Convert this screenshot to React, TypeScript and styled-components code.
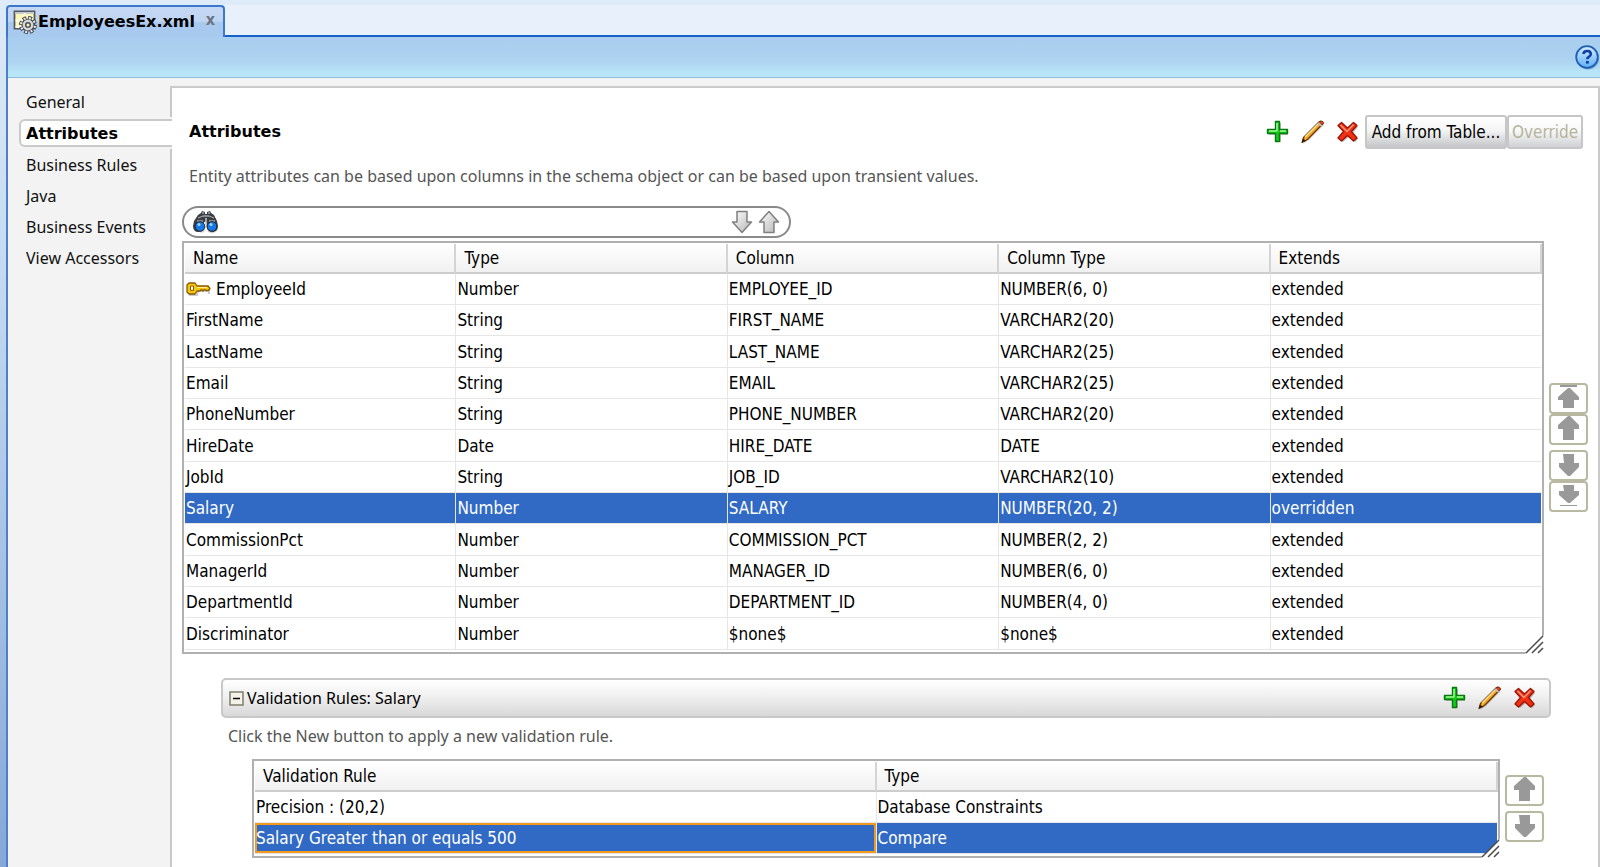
import React from "react";
import styled, { createGlobalStyle, css } from "styled-components";

const UI = '"DejaVu Sans Condensed", "Noto Sans", sans-serif';
const PROSE = '"Noto Sans", "DejaVu Sans Condensed", sans-serif';
const BOLD = '"DejaVu Sans", "Noto Sans", sans-serif';

const GlobalStyle = createGlobalStyle`
  * { box-sizing: border-box; }
  body { margin: 0; font: 17px/20px ${UI}; color: #000; }
  button, input { font: inherit; color: inherit; }
`;

const Window = styled.div`
  display: flex;
  flex-direction: column;
  min-height: 100vh;
  padding: 5px 0 0 6px;
  background: linear-gradient(#deebf8 0, #c4daf0 270px, #bcd5ed 340px, #86a8d8 867px);
`;

const TabBar = styled.div`
  display: flex;
  height: 32px;
  background: #e8f1fb;
`;

const EditorTab = styled.div`
  display: flex;
  align-items: center;
  gap: 1px;
  width: 219px;
  padding: 0 8px 0 5px;
  border: 2px solid #3b78cc;
  border-bottom: 0;
  border-radius: 4px 4px 0 0;
  background: linear-gradient(#c5d8f4 0, #c0d5f2 14px, #a9c8ee 16px, #a8caee 100%);
`;

const TabTitle = styled.span`
  flex: 1;
  font: bold 16px/20px ${BOLD};
  white-space: nowrap;
`;

const BareButton = styled.button`
  display: flex;
  align-items: center;
  justify-content: center;
  padding: 0;
  border: 0;
  background: none;
`;

const CloseTab = styled(BareButton)`
  font: bold 16px/16px ${UI};
  color: #6c7480;
  margin-bottom: 4px;
`;

const TabRule = styled.div`
  flex: 1;
  border-bottom: 2px solid #1462c8;
`;

const Editor = styled.div`
  flex: 1;
  display: flex;
  flex-direction: column;
  border-left: 2px solid #4f7fcb;
  background: #f3f3f3;
`;

const HeaderBand = styled.div`
  display: flex;
  justify-content: flex-end;
  align-items: center;
  height: 41px;
  border-bottom: 1px solid #8cbce0;
  background: linear-gradient(#a8cdee 0, #aed3f0 60%, #b8e6f8 90%);
`;

const Columns = styled.div`
  flex: 1;
  display: flex;
  padding-top: 8px;
`;

const Nav = styled.nav`
  width: 164px;
  display: flex;
  flex-direction: column;
  padding-left: 11px;
`;

const NavEdge = css`
  border-right: 2px solid #c8c8c8;
`;

const NavLink = styled.a<{ $current?: boolean }>`
  display: block;
  height: 31px;
  padding-left: 7px;
  font: 16px/33px ${PROSE};
  color: #111;
  text-decoration: none;
  ${NavEdge}
  ${(p) =>
    p.$current &&
    css`
      height: 28px;
      margin: 2px 0;
      padding-left: 5px;
      font: bold 16px/26px ${BOLD};
      color: #000;
      border: 2px solid #cacaca;
      border-right: 0;
      border-radius: 6px 0 0 6px;
      background: #fff;
    `}
`;

const NavFill = styled.div`
  flex: 1;
  ${NavEdge}
`;

const Panel = styled.main`
  flex: 1;
  min-width: 0;
  padding: 27px 10px 10px;
  border-top: 2px solid #cacaca;
  border-right: 2px solid #cacaca;
  background: #fff;
`;

const PanelHead = styled.div`
  display: flex;
  align-items: center;
  height: 34px;
  padding: 0 5px 0 7px;
`;

const PanelTitle = styled.h1`
  flex: 1;
  margin: 0;
  font: bold 16px/20px ${BOLD};
`;

const ToolIcons = styled.div`
  display: flex;
  gap: 11px;
`;

const PushButton = styled.button`
  height: 34px;
  padding: 0;
  border: 2px solid #c6c6c6;
  border-radius: 3px;
  background: linear-gradient(#fff 0, #f4f4f4 45%, #c4c6c8 100%);
  white-space: nowrap;
  &:disabled { color: #b4b49c; background: linear-gradient(#fff 0, #f8f8f8 45%, #cfd1d3 100%); }
`;

const ButtonPair = styled.div`
  display: grid;
  grid-template-columns: 142px 76px;
  margin-left: 5px;
`;

const Description = styled.p`
  margin: 0;
  padding: 17px 7px 0;
  font: 16px/20px ${PROSE};
  color: #555;
`;

const SearchBox = styled.div`
  display: flex;
  align-items: center;
  width: 609px;
  max-width: 100%;
  height: 32px;
  margin: 20px 0 3px;
  padding: 0 9px;
  border: 2px solid #8a8a8a;
  border-radius: 16px;
`;

const SearchInput = styled.input`
  flex: 1;
  min-width: 0;
  margin: 0 8px;
  border: 0;
  outline: 0;
  background: none;
`;

const FindButtons = styled.div`
  display: flex;
  gap: 5px;
`;

const WithMovers = styled.div`
  display: flex;
  align-items: center;
  gap: 5px;
`;

const TableFrame = styled.div`
  position: relative;
  flex: 1;
  min-width: 0;
  padding: 1px 0 2px 1px;
  border: 2px solid #b0b0b0;
`;

const Table = styled.table`
  width: 100%;
  table-layout: fixed;
  border-collapse: separate;
  border-spacing: 0;
`;

const HeadCell = styled.th`
  height: 30px;
  padding: 0 0 0 8px;
  border-right: 2px solid #d4d4d4;
  border-bottom: 2px solid #cdcdcd;
  background: linear-gradient(#fff, #f1f1f1);
  font-weight: normal;
  text-align: left;
`;

const Row = styled.tr<{ $selected?: boolean }>`
  height: 31px;
  &:nth-child(3n) { height: 32px; }
  ${(p) => p.$selected && css`color: #fff; background: #316ac5;`}
`;

const Cell = styled.td<{ $focused?: boolean }>`
  padding: 0 0 0 1px;
  border-right: 1px solid #e6e6e6;
  border-bottom: 1px solid #e6e6e6;
  white-space: nowrap;
  &:last-child { border-right-color: #fff; }
  ${(p) => p.$focused && css`box-shadow: inset 0 0 0 2px #f39a1c;`}
`;

const KeyLabel = styled.span`
  display: inline-flex;
  align-items: center;
  gap: 5px;
  vertical-align: top;
`;

const Grip = styled.svg`
  position: absolute;
  right: -2px;
  bottom: -2px;
  display: block;
`;

const Movers = styled.div`
  display: flex;
  flex-direction: column;
  gap: 5px;
`;

const MoverGroup = styled.div`
  display: flex;
  flex-direction: column;
`;

const MoverButton = styled(BareButton)`
  width: 39px;
  height: 31px;
  border: 2px solid #b9b9a2;
  border-radius: 4px;
  background: #fff;
`;

const Section = styled.section`
  display: flex;
  flex-direction: column;
  margin: 24px 37px 0 39px;
`;

const SectionHead = styled.div`
  display: flex;
  align-items: center;
  height: 40px;
  padding: 0 12px 0 6px;
  border: 2px solid #c8c8c8;
  border-radius: 5px;
  background: linear-gradient(#fff 0, #f0f0f0 45%, #d8d8d8 100%);
`;

const SectionTitle = styled.h2`
  flex: 1;
  margin: 0 0 0 3px;
  font: 16px/20px ${PROSE};
`;

const SectionBody = styled.div`
  padding: 8px 7px 0;
`;

const Hint = styled(Description)`
  padding: 0;
`;

const Indented = styled.div`
  padding: 13px 0 0 24px;
`;

const PlusIcon = () => (
  <svg width="24" height="24" viewBox="0 0 24 24" aria-hidden="true">
    <path d="M10 3h5v7h7v5h-7v7h-5v-7H3v-5h7z" fill="#000" opacity=".25" />
    <path d="M9.500 1.500h4v8h8v4h-8v8h-4v-8h-8v-4h8z" fill="#14cc14" stroke="#067a10" strokeWidth="1.400" strokeLinejoin="round" />
    <path d="M11 3v8M3 11h8M14 11h6" stroke="#a5f59d" strokeWidth="1.500" fill="none" />
  </svg>
);

const PencilIcon = () => (
  <svg width="24" height="24" viewBox="0 0 24 24" aria-hidden="true">
    <path d="M2 24l3-5L20 4l3 1-15 15z" fill="#000" opacity=".18" />
    <path d="M1 22.500L2.500 17.500 18.500 1.500q2.500-1 4 1.500L6.500 19.500z" fill="#f6a623" stroke="#6b3508" strokeWidth="1.200" strokeLinejoin="round" />
    <path d="M4 17L17 4" stroke="#ffe79c" strokeWidth="1.500" />
    <path d="M17 3l4 3" stroke="#b9bcc9" strokeWidth="2" />
    <path d="M18.500 1.500q3-1 4 1.500l-1.500 2z" fill="#f0501c" stroke="#8c2a0a" strokeWidth=".8" />
    <path d="M1 22.500l1-4 3 2.200z" fill="#2a1a10" />
  </svg>
);

const CrossIcon = () => (
  <svg width="24" height="24" viewBox="0 0 24 24" aria-hidden="true">
    <path d="M4 7l3-3 6 5 6-5 3 3-5 6 5 6-3 3-6-5-6 5-3-3 5-6z" fill="#000" opacity=".25" />
    <path d="M2 5.500L5.500 2.500l6 5.500 6-5.500L21 5.500 15.500 11.500 21 18l-3.500 3-6-5.500-6 5.500L2 18l5.500-6.500z" fill="#f03212" stroke="#9c1206" strokeWidth="1.300" strokeLinejoin="round" />
    <path d="M4.500 5L11 11.500 17.500 4.500" stroke="#ff9a80" strokeWidth="1.500" fill="none" />
  </svg>
);

const FileIcon = () => (
  <svg width="24" height="24" viewBox="0 0 24 24" aria-hidden="true">
    <path d="M1.500 1.500h20v17h-20z" fill="#fbf7b4" stroke="#555a60" strokeWidth="1.800" />
    <path d="M2 3h19" stroke="#c5c9cd" strokeWidth="2" />
    <path d="M2.500 10.500h6M11.500 3v5M2.500 17h7" stroke="#fff" strokeWidth="2" />
    <circle cx="15" cy="15" r="7" fill="none" stroke="#45494f" strokeWidth="4" strokeDasharray="3.600 1.898" />
    <circle cx="15" cy="15" r="6" fill="#d5d7da" stroke="#45494f" strokeWidth="1.200" />
    <circle cx="15" cy="15" r="7" fill="none" stroke="#e6e8ea" strokeWidth="2.200" strokeDasharray="2 3.498" strokeDashoffset="-.8" />
    <circle cx="15" cy="15" r="2.300" fill="#f8f4b0" stroke="#4c5056" strokeWidth="1.500" />
  </svg>
);

const HelpIcon = () => (
  <svg width="25" height="25" viewBox="0 0 25 25" aria-hidden="true">
    <defs>
      <linearGradient id="help" x1="0" y1="0" x2="0" y2="1">
        <stop offset="0" stopColor="#d6ebff" />
        <stop offset="1" stopColor="#5fb0f5" />
      </linearGradient>
    </defs>
    <circle cx="13" cy="13.500" r="11" fill="#24508c" opacity=".4" />
    <circle cx="12" cy="12" r="10.800" fill="url(#help)" stroke="#1e5fb4" strokeWidth="1.800" />
    <path d="M8.500 9q.2-3 3.700-3 3.600 0 3.600 3 0 1.700-2 2.800-1.500.8-1.500 2.400" fill="none" stroke="#0e3fa6" strokeWidth="2.600" />
    <path d="M11 16h2.800v2.600H11z" fill="#0e3fa6" />
  </svg>
);

const BinocularsIcon = () => (
  <svg width="26" height="24" viewBox="0 0 26 24" aria-hidden="true">
    <path d="M2 19q4 5 9 3l2-6 2 6q6 3 10-2l-2-6z" fill="#000" opacity=".2" />
    <path d="M5 5l3-2 1-2 3 1v2h2V2l3-1 1 2 3 2 3 6 1 5q0 5-5 6-5 0-6-4l-1-6h-2l-1 6q-1 4-6 4-4-1-4-6l1-5z" fill="#3a3d42" />
    <path d="M9 3l2 0M15 3h2M5 8l5-2M16 6l5 2M10 6h6M4 11h6M16 11h6" stroke="#a0a4aa" strokeWidth="1.300" />
    <path d="M13 8v7" stroke="#c6c9ce" strokeWidth="1.500" />
    <circle cx="7" cy="16.500" r="4.800" fill="#1678e6" stroke="#22262c" strokeWidth="1" />
    <circle cx="19" cy="16.500" r="4.800" fill="#1678e6" stroke="#22262c" strokeWidth="1" />
    <circle cx="6" cy="14.500" r="1.500" fill="#9ed2ff" />
    <circle cx="18" cy="14.500" r="1.500" fill="#9ed2ff" />
  </svg>
);

const KeyIcon = () => (
  <svg width="25" height="14" viewBox="0 0 25 14" aria-hidden="true">
    <path d="M3 13h8l1-4h11v3" fill="none" stroke="#000" opacity=".2" strokeWidth="2" />
    <path d="M3 1h6l2 3h11l2 2.500-1.500 2H20l-1.500-1L17 9l-1.500-1.500L14 9h-3l-2 3H3L1 10V3z" fill="#f7c90e" stroke="#8a5a00" strokeWidth="1.300" strokeLinejoin="round" />
    <path d="M4.500 4h3v4.500h-3z" fill="#fff" stroke="#8a5a00" />
    <path d="M11 5.500h10" stroke="#fff08a" />
  </svg>
);

const FindArrow = ({ up }: { up?: boolean }) => (
  <svg width="22" height="24" viewBox="0 0 22 24" aria-hidden="true">
    <defs>
      <linearGradient id={up ? "fu" : "fd"} x1="0" y1="0" x2="1" y2="1">
        <stop offset="0" stopColor="#fff" />
        <stop offset="1" stopColor="#b4b4b4" />
      </linearGradient>
    </defs>
    <path
      d={up ? "M11 1.500L20.500 12H16v10.500H6V12H1.500z" : "M6 1.500h10V12h4.500L11 22.500 1.500 12H6z"}
      fill={`url(#${up ? "fu" : "fd"})`}
      stroke="#808080"
      strokeWidth="1.500"
      strokeLinejoin="round"
    />
  </svg>
);

type Direction = "top" | "up" | "down" | "bottom";
const moverPaths: Record<Direction, string> = {
  top: "M4 0h17v2H4zM12 3h2l9 9v3h-5v8H7v-8H2v-3z",
  up: "M12 0h2l9 9v4h-5v11H7V13H2V9z",
  down: "M7 2h11v9h5v4l-9 9h-2l-9-9v-4h5z",
  bottom: "M7 2h11v6h5v4l-9 8h-2l-9-8V8h5zM4 22h17v1H4z",
};

const MoverIcon = ({ direction }: { direction: Direction }) => (
  <svg width="25" height="27" viewBox="0 0 25 27" aria-hidden="true">
    <path d={moverPaths[direction]} fill="#999" />
  </svg>
);

const Mover = ({ direction }: { direction: Direction }) => (
  <MoverButton type="button" aria-label={`Move ${direction}`}>
    <MoverIcon direction={direction} />
  </MoverButton>
);

const ResizeGrip = () => (
  <Grip width="19" height="19" viewBox="0 0 19 19" aria-hidden="true">
    <path d="M19 0v19H0z" fill="#fff" />
    <path d="M1 18L18 1M7 18L18 7M13 18l5-5" stroke="#4a4a4a" strokeWidth="1.500" />
  </Grip>
);

const EditTools = () => (
  <ToolIcons>
    <BareButton type="button" aria-label="New"><PlusIcon /></BareButton>
    <BareButton type="button" aria-label="Edit"><PencilIcon /></BareButton>
    <BareButton type="button" aria-label="Delete"><CrossIcon /></BareButton>
  </ToolIcons>
);

const pages = ["General", "Attributes", "Business Rules", "Java", "Business Events", "View Accessors"];

const attributeHeads = ["Name", "Type", "Column", "Column Type", "Extends"];
const attributes = [
  ["EmployeeId", "Number", "EMPLOYEE_ID", "NUMBER(6, 0)", "extended"],
  ["FirstName", "String", "FIRST_NAME", "VARCHAR2(20)", "extended"],
  ["LastName", "String", "LAST_NAME", "VARCHAR2(25)", "extended"],
  ["Email", "String", "EMAIL", "VARCHAR2(25)", "extended"],
  ["PhoneNumber", "String", "PHONE_NUMBER", "VARCHAR2(20)", "extended"],
  ["HireDate", "Date", "HIRE_DATE", "DATE", "extended"],
  ["JobId", "String", "JOB_ID", "VARCHAR2(10)", "extended"],
  ["Salary", "Number", "SALARY", "NUMBER(20, 2)", "overridden"],
  ["CommissionPct", "Number", "COMMISSION_PCT", "NUMBER(2, 2)", "extended"],
  ["ManagerId", "Number", "MANAGER_ID", "NUMBER(6, 0)", "extended"],
  ["DepartmentId", "Number", "DEPARTMENT_ID", "NUMBER(4, 0)", "extended"],
  ["Discriminator", "Number", "$none$", "$none$", "extended"],
];

const ruleHeads = ["Validation Rule", "Type"];
const rules = [
  ["Precision : (20,2)", "Database Constraints"],
  ["Salary Greater than or equals 500", "Compare"],
];

interface GridProps {
  heads: string[];
  rows: string[][];
  selected: string;
  keyed?: string;
  focusFirst?: boolean;
}

const DataGrid = ({ heads, rows, selected, keyed, focusFirst }: GridProps) => (
  <TableFrame>
    <Table>
      <thead>
        <tr>{heads.map((h) => <HeadCell key={h} scope="col">{h}</HeadCell>)}</tr>
      </thead>
      <tbody>
        {rows.map((row) => {
          const isSelected = row[0] === selected;
          return (
            <Row key={row[0]} $selected={isSelected}>
              {row.map((text, i) => (
                <Cell key={i} $focused={focusFirst && isSelected && i === 0}>
                  {i === 0 && text === keyed ? <KeyLabel><KeyIcon />{text}</KeyLabel> : text}
                </Cell>
              ))}
            </Row>
          );
        })}
      </tbody>
    </Table>
    <ResizeGrip />
  </TableFrame>
);

export default function App() {
  return (
    <Window>
      <GlobalStyle />
      <TabBar>
        <EditorTab>
          <FileIcon />
          <TabTitle>EmployeesEx.xml</TabTitle>
          <CloseTab type="button" aria-label="Close tab">x</CloseTab>
        </EditorTab>
        <TabRule />
      </TabBar>
      <Editor>
        <HeaderBand>
          <BareButton type="button" aria-label="Help"><HelpIcon /></BareButton>
        </HeaderBand>
        <Columns>
          <Nav>
            {pages.map((page) => (
              <NavLink key={page} href="#" $current={page === "Attributes"}>{page}</NavLink>
            ))}
            <NavFill />
          </Nav>
          <Panel>
            <PanelHead>
              <PanelTitle>Attributes</PanelTitle>
              <EditTools />
              <ButtonPair>
                <PushButton type="button">Add from Table...</PushButton>
                <PushButton type="button" disabled>Override</PushButton>
              </ButtonPair>
            </PanelHead>
            <Description>
              Entity attributes can be based upon columns in the schema object or can be based upon transient values.
            </Description>
            <SearchBox>
              <BinocularsIcon />
              <SearchInput type="text" aria-label="Find attribute" />
              <FindButtons>
                <BareButton type="button" aria-label="Find next"><FindArrow /></BareButton>
                <BareButton type="button" aria-label="Find previous"><FindArrow up /></BareButton>
              </FindButtons>
            </SearchBox>
            <WithMovers>
              <DataGrid heads={attributeHeads} rows={attributes} selected="Salary" keyed="EmployeeId" />
              <Movers>
                <MoverGroup>
                  <Mover direction="top" />
                  <Mover direction="up" />
                </MoverGroup>
                <MoverGroup>
                  <Mover direction="down" />
                  <Mover direction="bottom" />
                </MoverGroup>
              </Movers>
            </WithMovers>
            <Section>
              <SectionHead>
                <BareButton type="button" aria-label="Collapse section">
                  <svg width="15" height="15" viewBox="0 0 15 15" aria-hidden="true">
                    <path d="M1 1h13v13H1z" fill="#f4f3ea" stroke="#7f7f6c" strokeWidth="1.500" />
                    <path d="M4 7.500h7" stroke="#000" strokeWidth="1.500" />
                  </svg>
                </BareButton>
                <SectionTitle>Validation Rules: Salary</SectionTitle>
                <EditTools />
              </SectionHead>
              <SectionBody>
                <Hint>Click the New button to apply a new validation rule.</Hint>
                <Indented>
                  <WithMovers>
                    <DataGrid
                      heads={ruleHeads}
                      rows={rules}
                      selected="Salary Greater than or equals 500"
                      focusFirst
                    />
                    <Movers>
                      <Mover direction="up" />
                      <Mover direction="down" />
                    </Movers>
                  </WithMovers>
                </Indented>
              </SectionBody>
            </Section>
          </Panel>
        </Columns>
      </Editor>
    </Window>
  );
}
